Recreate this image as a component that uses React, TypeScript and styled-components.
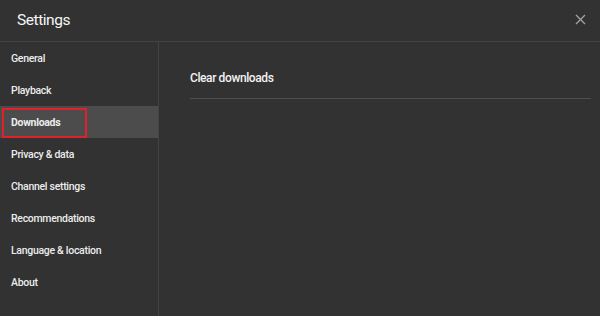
import React from "react";
import styled, { createGlobalStyle } from "styled-components";

const Global = createGlobalStyle`
  html, body { margin: 0; padding: 0; background: #323232; }
  body { font-family: Roboto, "Noto Sans", Arial, sans-serif; }
`;

const Dialog = styled.div`
  width: 600px;
  height: 316px;
  background: #323232;
  color: #f1f1f1;
  display: flex;
  flex-direction: column;
  overflow: hidden;
`;

const Header = styled.div`
  height: 41px;
  border-bottom: 1px solid #444;
  display: flex;
  align-items: center;
  justify-content: space-between;
  padding: 0 14px 0 17px;
  box-sizing: content-box;
`;

const Title = styled.div`
  font-size: 15.5px;
  font-weight: 400;
  letter-spacing: -0.45px;
  color: #f6f6f6;
  margin-top: -1px;
`;

const Close = styled.button`
  background: none;
  border: none;
  padding: 0;
  width: 12px;
  height: 12px;
  display: flex;
  align-items: center;
  justify-content: center;
  color: #a0a0a0;
  cursor: pointer;
  margin-top: -2px;
`;

const Body = styled.div`
  flex: 1;
  display: flex;
`;

const Sidebar = styled.nav`
  width: 158px;
  border-right: 1px solid #444;
  display: flex;
  flex-direction: column;
`;

const NavItem = styled.div<{ $active?: boolean }>`
  height: 32px;
  display: flex;
  align-items: center;
  padding-left: 11px;
  font-size: 10.5px;
  letter-spacing: -0.3px;
  font-weight: ${(p) => (p.$active ? 700 : 500)};
  color: #ececec;
  background: ${(p) => (p.$active ? "#4c4c4c" : "transparent")};
  position: relative;
`;

const Highlight = styled.span`
  position: absolute;
  left: 2px;
  top: 2px;
  width: 81px;
  height: 26px;
  border: 2px solid #e0202a;
`;

const Content = styled.div`
  flex: 1;
  padding: 16px 9px 0 31px;
`;

const Row = styled.div`
  height: 40px;
  display: flex;
  align-items: center;
  font-size: 12px;
  font-weight: 500;
  letter-spacing: -0.4px;
  color: #f2f2f2;
  border-bottom: 1px solid #4e4e4e;
`;

const items = [
  "General",
  "Playback",
  "Downloads",
  "Privacy & data",
  "Channel settings",
  "Recommendations",
  "Language & location",
  "About",
];

export default function App() {
  return (
    <>
      <Global />
      <Dialog>
        <Header>
          <Title>Settings</Title>
          <Close aria-label="Close">
            <svg width="11" height="11" viewBox="0 0 11 11">
              <path d="M1 1L10 10M10 1L1 10" stroke="currentColor" strokeWidth="1.4" />
            </svg>
          </Close>
        </Header>
        <Body>
          <Sidebar>
            {items.map((it) => (
              <NavItem key={it} $active={it === "Downloads"}>
                {it === "Downloads" && <Highlight />}
                {it}
              </NavItem>
            ))}
          </Sidebar>
          <Content>
            <Row>Clear downloads</Row>
          </Content>
        </Body>
      </Dialog>
    </>
  );
}
